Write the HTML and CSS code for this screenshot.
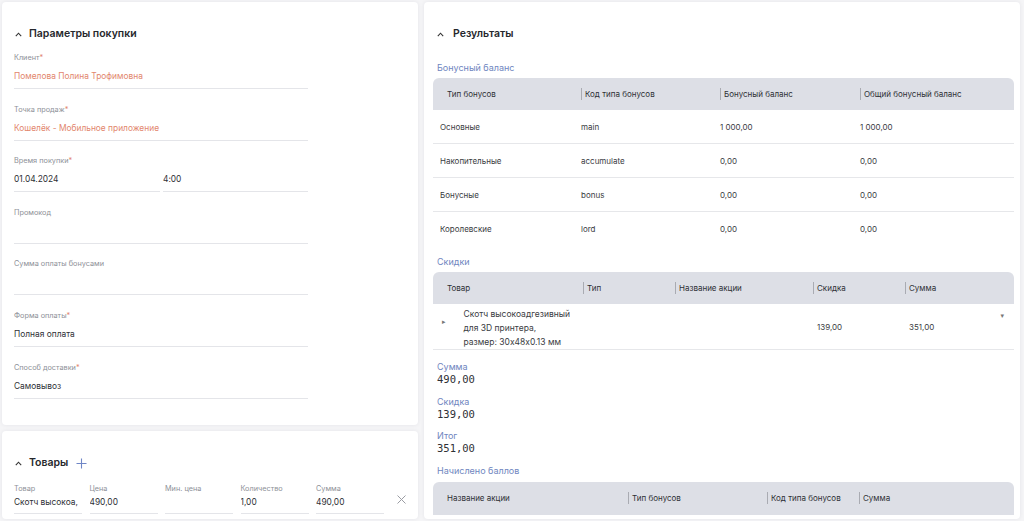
FILE: index.html
```html
<!DOCTYPE html>
<html lang="ru">
<head>
<meta charset="utf-8">
<title>Покупка</title>
<link rel="stylesheet" href="styles.css">
</head>
<body>
<div class="page">
  <div class="col-left">
    <section class="card params">
      <h2 class="card-title">
        <svg class="caret" width="7" height="5" viewBox="0 0 7 5"><path d="M0.8 4.2 L3.5 1.2 L6.2 4.2" fill="none" stroke="#333" stroke-width="1.1"/></svg>
        Параметры покупки
      </h2>
      <div class="field first">
        <div class="label">Клиент<span class="req">*</span></div>
        <div class="value accent">Помелова Полина Трофимовна</div>
      </div>
      <div class="field">
        <div class="label">Точка продаж<span class="req">*</span></div>
        <div class="value accent">Кошелёк - Мобильное приложение</div>
      </div>
      <div class="field">
        <div class="label">Время покупки<span class="req">*</span></div>
        <div class="split">
          <div class="value">01.04.2024</div>
          <div class="value">4:00</div>
        </div>
      </div>
      <div class="field">
        <div class="label">Промокод</div>
        <div class="value"></div>
      </div>
      <div class="field">
        <div class="label">Сумма оплаты бонусами</div>
        <div class="value"></div>
      </div>
      <div class="field">
        <div class="label">Форма оплаты<span class="req">*</span></div>
        <div class="value">Полная оплата</div>
      </div>
      <div class="field">
        <div class="label">Способ доставки<span class="req">*</span></div>
        <div class="value">Самовывоз</div>
      </div>
    </section>

    <section class="card goods">
      <h2 class="card-title">
        <svg class="caret" width="7" height="5" viewBox="0 0 7 5"><path d="M0.8 4.2 L3.5 1.2 L6.2 4.2" fill="none" stroke="#333" stroke-width="1.1"/></svg>
        Товары
        <svg class="plus" width="11" height="11" viewBox="0 0 11 11"><path d="M5.5 0.5 V10.5 M0.5 5.5 H10.5" stroke="#6f86c6" stroke-width="1.1"/></svg>
      </h2>
      <div class="goods-row">
        <div class="gcell"><div class="label">Товар</div><div class="gvalue">Скотч высокоа,</div></div>
        <div class="gcell"><div class="label">Цена</div><div class="gvalue">490,00</div></div>
        <div class="gcell"><div class="label">Мин. цена</div><div class="gvalue"></div></div>
        <div class="gcell"><div class="label">Количество</div><div class="gvalue">1,00</div></div>
        <div class="gcell"><div class="label">Сумма</div><div class="gvalue">490,00</div></div>
        <svg class="remove" width="9" height="9" viewBox="0 0 9 9"><path d="M0.5 0.5 L8.5 8.5 M8.5 0.5 L0.5 8.5" stroke="#9a9ca3" stroke-width="1"/></svg>
      </div>
    </section>
  </div>

  <section class="card results">
    <h2 class="card-title res-title">
      <svg class="caret" width="7" height="5" viewBox="0 0 7 5"><path d="M0.8 4.2 L3.5 1.2 L6.2 4.2" fill="none" stroke="#333" stroke-width="1.1"/></svg>
      Результаты
    </h2>

    <div class="sub-label first-sub">Бонусный баланс</div>
    <table class="grid bonus">
      <colgroup><col style="width:148px"><col style="width:139px"><col style="width:140px"><col></colgroup>
      <thead>
        <tr><th>Тип бонусов</th><th><span>Код типа бонусов</span></th><th><span>Бонусный баланс</span></th><th><span>Общий бонусный баланс</span></th></tr>
      </thead>
      <tbody>
        <tr><td>Основные</td><td>main</td><td>1 000,00</td><td>1 000,00</td></tr>
        <tr><td>Накопительные</td><td>accumulate</td><td>0,00</td><td>0,00</td></tr>
        <tr><td>Бонусные</td><td>bonus</td><td>0,00</td><td>0,00</td></tr>
        <tr><td>Королевские</td><td>lord</td><td>0,00</td><td>0,00</td></tr>
      </tbody>
    </table>

    <div class="sub-label">Скидки</div>
    <table class="grid discounts">
      <colgroup><col style="width:150px"><col style="width:92px"><col style="width:138px"><col style="width:92px"><col></colgroup>
      <thead>
        <tr><th>Товар</th><th><span>Тип</span></th><th><span>Название акции</span></th><th><span>Скидка</span></th><th><span>Сумма</span></th></tr>
      </thead>
      <tbody>
        <tr>
          <td class="prod"><div class="prod-wrap"><span class="tri">&#9656;</span><span class="prod-name">Скотч высокоадгезивный<br>для 3D принтера,<br>размер: 30x48x0.13 мм</span></div></td>
          <td></td>
          <td></td>
          <td class="num">139,00</td>
          <td class="num last">351,00<span class="drop">&#9662;</span></td>
        </tr>
      </tbody>
    </table>

    <div class="totals">
      <div class="total"><div class="sub-label t">Сумма</div><div class="mono">490,00</div></div>
      <div class="total"><div class="sub-label t">Скидка</div><div class="mono">139,00</div></div>
      <div class="total"><div class="sub-label t">Итог</div><div class="mono">351,00</div></div>
    </div>

    <div class="sub-label accrued">Начислено баллов</div>
    <table class="grid points">
      <colgroup><col style="width:195px"><col style="width:139px"><col style="width:92px"><col></colgroup>
      <thead>
        <tr><th>Название акции</th><th><span>Тип бонусов</span></th><th><span>Код типа бонусов</span></th><th><span>Сумма</span></th></tr>
      </thead>
    </table>
  </section>
</div>
</body>
</html>
```

FILE: styles.css
```css
* { box-sizing: border-box; }

html, body {
  margin: 0;
  padding: 0;
  background: #f5f5f7;
  font-family: Inter, "Noto Sans", "DejaVu Sans", sans-serif;
  font-feature-settings: "calt" 0;
  color: #2b2d33;
}

.page {
  display: grid;
  grid-template-columns: 416px 596px;
  gap: 6px;
  padding: 2px;
  height: 521px;
  overflow: hidden;
}

.col-left {
  display: flex;
  flex-direction: column;
  gap: 6px;
  min-height: 0;
}

.card {
  background: #fff;
  border-radius: 4px;
  box-shadow: 0 0 4px rgba(30, 35, 60, 0.07);
}

.card-title {
  display: flex;
  align-items: center;
  margin: 0;
  font-size: 10.5px;
  font-weight: 600;
  line-height: 20px;
  color: #25272c;
}

.caret { margin-left: 1px; margin-right: 7px; flex: none; }

.params {
  height: 423px;
  padding: 22px 12px 0 12px;
}

.field { width: 294px; margin-top: 14.6px; }
.field.first { margin-top: 8px; }

.label {
  font-size: 7.3px;
  line-height: 12px;
  color: #8d9097;
}
.req { color: #e2866d; }

.value {
  font-size: 8.4px;
  line-height: 18px;
  min-height: 22px;
  margin-top: 3px;
  padding-bottom: 3px;
  border-bottom: 1px solid #e4e5e9;
  color: #2e3035;
}
.value.accent { color: #e2866d; }

.split {
  display: grid;
  grid-template-columns: 146px 145px;
  gap: 3px;
}

.goods {
  flex: 1;
  padding: 22px 12px 0 12px;
}

.plus { margin-left: 8px; }

.goods-row {
  display: grid;
  grid-template-columns: repeat(5, 68px) 1fr;
  column-gap: 7.5px;
  margin-top: 10px;
  align-items: start;
}

.gvalue {
  font-size: 8.4px;
  line-height: 14px;
  min-height: 19px;
  padding-bottom: 4px;
  border-bottom: 1px solid #e4e5e9;
  white-space: nowrap;
  overflow: hidden;
  color: #2e3035;
}

.remove { margin-top: 12px; margin-left: 5px; }

.results {
  padding: 22px 6px 0 13px;
  overflow: hidden;
}

.res-title .caret { margin-left: 0; margin-right: 9px; }

.sub-label {
  font-size: 9px;
  line-height: 14px;
  color: #6f86c0;
  margin-top: 9px;
}
.sub-label.first-sub { margin-top: 17px; }

.grid {
  width: 581px;
  margin-left: -4px;
  margin-top: 3px;
  border-collapse: separate;
  border-spacing: 0;
  table-layout: fixed;
}

.grid th {
  background: #dddfe6;
  height: 32px;
  font-size: 8px;
  font-weight: 400;
  text-align: left;
  color: #2e3035;
  padding: 0;
  white-space: nowrap;
}
.grid th:first-child { padding-left: 14px; border-top-left-radius: 6px; }
.grid th:last-child { border-top-right-radius: 6px; }
.grid th span {
  display: inline-block;
  border-left: 1px solid #a9abb2;
  padding-left: 3px;
  line-height: 12px;
}

.grid td {
  height: 34px;
  font-size: 8px;
  color: #3a3c42;
  padding: 0;
  border-bottom: 1px solid #e6e7ea;
  white-space: nowrap;
}
.bonus td:first-child { padding-left: 7px; }
.bonus tr:last-child td { border-bottom: none; }

.discounts td { height: 45px; }
.discounts td.prod {
  vertical-align: top;
  padding: 3px 0 0 9px;
}
.prod-wrap { display: flex; align-items: flex-start; }
.tri {
  font-size: 7px;
  line-height: 7px;
  color: #777;
  margin-top: 11px;
  margin-right: 18px;
}
.prod-name {
  line-height: 14px;
  font-size: 8.5px;
}
.discounts td.num { padding-left: 4px; }
.discounts td.last { position: relative; }
.drop {
  position: absolute;
  right: 10px;
  top: 7px;
  font-size: 7px;
  color: #777;
}

.totals { margin-top: 10px; }
.total { margin-bottom: 8.5px; }
.sub-label.t { margin-top: 0; line-height: 13px; }
.mono {
  font-family: "DejaVu Sans Mono", "Liberation Mono", monospace;
  font-size: 10.5px;
  line-height: 13px;
  color: #2e3035;
}

.sub-label.accrued { margin-top: 0; }
.points { margin-top: 4px; }
.points th { height: 33px; }
```
